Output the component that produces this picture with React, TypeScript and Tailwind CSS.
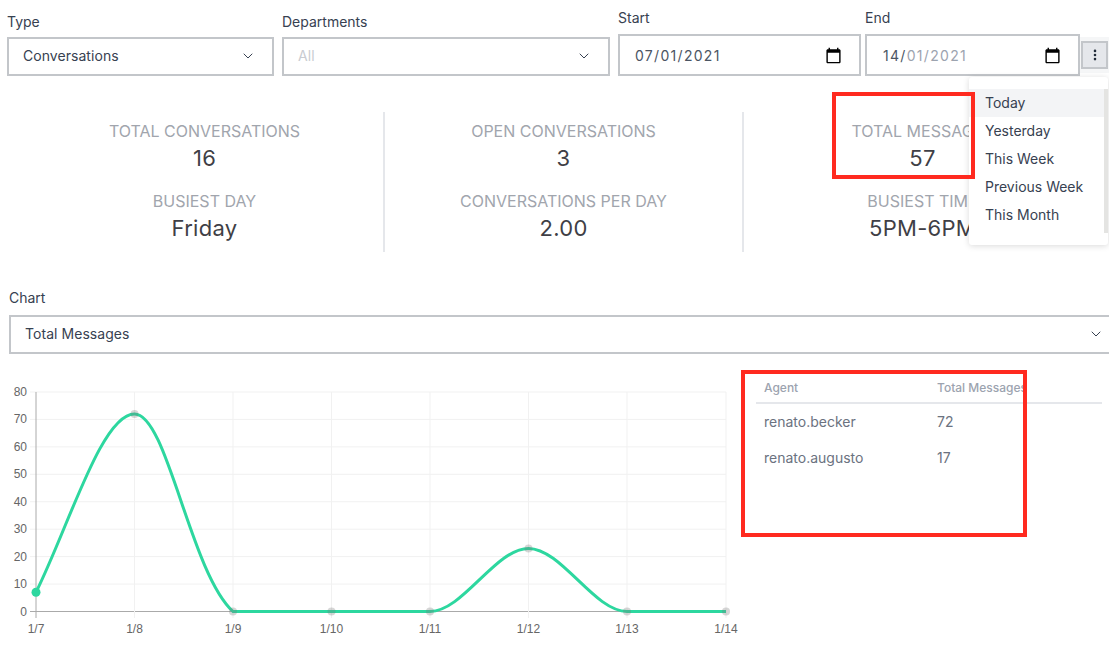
import { ChevronDown, EllipsisVertical } from "lucide-react";

const xs = [36, 134.5, 233, 331.5, 430, 528.5, 627, 726];
const yTicks = [80, 70, 60, 50, 40, 30, 20, 10, 0];
const labels = ["1/7", "1/8", "1/9", "1/10", "1/11", "1/12", "1/13", "1/14"];
const yOf = (v: number) => 611.5 - v * 2.744;
const values = [7, 72, 0, 0, 0, 23, 0, 0];

const menuItems = ["Today", "Yesterday", "This Week", "Previous Week", "This Month"];

function CalendarIcon() {
  return (
    <svg viewBox="0 0 24 24" className="h-[17px] w-[17px] fill-black">
      <path d="M20 3h-1V1h-2v2H7V1H5v2H4c-1.1 0-2 .9-2 2v16c0 1.1.9 2 2 2h16c1.1 0 2-.9 2-2V5c0-1.1-.9-2-2-2zm0 18H4V8h16v13z" />
    </svg>
  );
}

function SelectBox({ value, muted, className }: { value: string; muted?: boolean; className: string }) {
  return (
    <div
      className={`flex h-[39px] items-center justify-between border-2 border-[#c3c6ca] bg-white pr-[16px] pb-[2px] pl-[14px] text-[14px] tracking-[0.05px] ${
        muted ? "text-[#c9ccd1]" : "text-[#374151]"
      } ${className}`}
    >
      <span>{value}</span>
      <ChevronDown className="h-4 w-4 text-[#374151]" strokeWidth={1.5} />
    </div>
  );
}

function DateBox({ children, className }: { children: React.ReactNode; className: string }) {
  return (
    <div
      className={`flex h-[42px] items-center justify-between border-2 border-[#c3c6ca] bg-white pr-[17px] text-[14px] tracking-[1.3px] text-[#4b5563] ${className}`}
    >
      <span>{children}</span>
      <CalendarIcon />
    </div>
  );
}

function Stat({ label, value }: { label: string; value: string }) {
  return (
    <div className="flex h-[70px] flex-col items-center last:h-[54px]">
      <div className="text-[16px] leading-[20px] whitespace-nowrap text-[#a1a5ad]">{label}</div>
      <div className="text-[22px] leading-[34px] tracking-[0.3px] whitespace-nowrap text-[#3f3f46]">{value}</div>
    </div>
  );
}

function Chart() {
  const pts = xs.map((x, i) => ({ x, y: yOf(values[i]) }));
  const third = 98.5 / 3;
  let d = `M${pts[0].x} ${pts[0].y}`;
  for (let i = 1; i < pts.length; i++) {
    const a = pts[i - 1];
    const b = pts[i];
    const c1y = i === 1 ? a.y - 66 : a.y;
    // the drop into 1/9 lands at an angle, not flat
    const c2 = i === 2 ? "190 572" : `${b.x - third} ${b.y}`;
    d += ` C${a.x + third} ${c1y} ${c2} ${b.x} ${b.y}`;
  }
  return (
    <svg width="740" height="270" viewBox="0 370 740 270" className="shrink-0">
      {yTicks.map((t) => (
        <g key={t}>
          <line x1="30" x2="726" y1={yOf(t)} y2={yOf(t)} stroke={t === 0 ? "#aaaaaa" : "#f1f1f1"} />
          <text x="27" y={yOf(t) + 4} textAnchor="end" fontSize="12" fill="#666666" fontFamily="Liberation Sans, sans-serif">
            {t}
          </text>
        </g>
      ))}
      {xs.map((x, i) => (
        <g key={x}>
          <line x1={x} x2={x} y1="392" y2="618" stroke={i === 0 ? "#aaaaaa" : "#f1f1f1"} />
          <text x={x} y="633" textAnchor="middle" fontSize="12" fill="#666666" fontFamily="Liberation Sans, sans-serif">
            {labels[i]}
          </text>
        </g>
      ))}
      <path d={d} fill="none" stroke="#2dd79f" strokeWidth="3" />
      {pts.slice(1).map((p) => (
        <circle key={p.x} cx={p.x} cy={p.y} r="4" fill="rgba(120,120,120,0.3)" />
      ))}
      <circle cx={pts[0].x} cy={pts[0].y} r="4.5" fill="#2dd79f" />
    </svg>
  );
}

export default function App() {
  return (
    <div className="relative h-[672px] w-[1109px] overflow-hidden bg-white font-['Inter',sans-serif]">
      <div className="flex items-end pt-[8px] pl-[7px]">
        <div className="w-[267px]">
          <div className="mb-[5px] text-[14px] leading-[20px] text-[#374151]">Type</div>
          <SelectBox value="Conversations" className="w-full" />
        </div>
        <div className="ml-[8px] w-[328px]">
          <div className="mb-[5px] text-[14px] leading-[20px] text-[#374151]">Departments</div>
          <SelectBox value="All" muted className="w-full" />
        </div>
        <div className="ml-[8px] w-[243px]">
          <div className="mb-[6px] text-[14px] leading-[20px] text-[#374151]">Start</div>
          <DateBox className="w-full pl-[15px]">07/01/2021</DateBox>
        </div>
        <div className="ml-[4px] w-[215px]">
          <div className="mb-[6px] text-[14px] leading-[20px] text-[#374151]">End</div>
          <DateBox className="w-full pl-[16px]">
            14/<span className="text-[#9ca3af]">01/2021</span>
          </DateBox>
        </div>
        <div className="mb-[3px] flex h-[36px] w-[29px] items-center justify-center bg-[#f5f6f7]">
          <div className="flex h-[28px] w-[27px] items-center justify-center border-2 border-[#c3c6ca] bg-[#e5e7eb]">
            <EllipsisVertical className="h-[14px] w-[14px] text-[#1f2937]" strokeWidth={2.5} />
          </div>
        </div>
      </div>

      <div className="mt-[36px] ml-[24px] grid h-[140px] w-[1077px] grid-cols-3">
        <div className="flex flex-col pt-[9px] pl-[2px]">
          <Stat label="TOTAL CONVERSATIONS" value="16" />
          <Stat label="BUSIEST DAY" value="Friday" />
        </div>
        <div className="flex flex-col border-l-2 border-[#e5e7eb] pt-[9px]">
          <Stat label="OPEN CONVERSATIONS" value="3" />
          <Stat label="CONVERSATIONS PER DAY" value="2.00" />
        </div>
        <div className="flex flex-col border-l-2 border-[#e5e7eb] pt-[9px]">
          <Stat label="TOTAL MESSAGES" value="57" />
          <Stat label="BUSIEST TIME" value="5PM-6PM" />
        </div>
      </div>

      <div className="mt-[36px] ml-[9px] text-[14px] leading-[20px] text-[#374151]">Chart</div>
      <SelectBox value="Total Messages" className="mt-[7px] ml-[9px] w-[1113px]" />

      <div className="mt-[16px] flex items-start">
        <Chart />
        <div className="ml-[16px] w-[346px] pt-[3px]">
          <div className="flex h-[31px] items-center border-b-2 border-[#e5e7eb] pl-[8px] text-[12px] font-medium text-[#9ca3af]">
            <div className="w-[173px]">Agent</div>
            <div>Total Messages</div>
          </div>
          {[
            ["renato.becker", "72"],
            ["renato.augusto", "17"],
          ].map(([name, count]) => (
            <div key={name} className="flex h-[36px] items-center pb-[2px] pl-[8px] text-[14px] text-[#6b7280]">
              <div className="w-[173px]">{name}</div>
              <div>{count}</div>
            </div>
          ))}
        </div>
      </div>

      <div className="absolute top-[77px] left-[969px] h-[168px] w-[139px] rounded-[3px] bg-white shadow-[0_1px_6px_rgba(0,0,0,0.15)]">
        <div className="pt-[12px] pr-[4px]">
          {menuItems.map((item, i) => (
            <div
              key={item}
              className={`flex h-[28px] items-center pb-[1px] pl-[16px] text-[14px] text-[#374151] ${i === 0 ? "bg-[#f3f4f6]" : ""}`}
            >
              {item}
            </div>
          ))}
        </div>
        <div className="absolute top-[12px] right-0 h-[144px] w-[4px] bg-[#e4e4e2]" />
      </div>

      <div className="absolute top-[92px] left-[832px] h-[87px] w-[143px] border-[4px] border-[#ff2a1f]" />
      <div className="absolute top-[370px] left-[741px] h-[167px] w-[286px] border-[4px] border-[#ff2a1f]" />
    </div>
  );
}
